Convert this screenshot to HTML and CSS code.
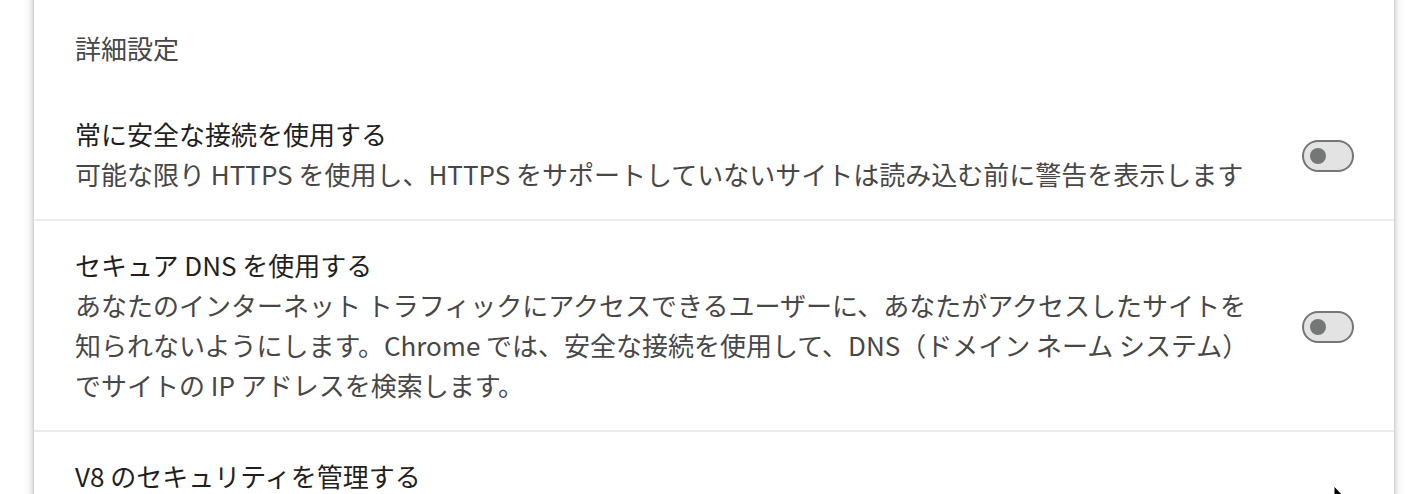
FILE: index.html
```html
<!DOCTYPE html>
<html lang="ja">
<head>
<meta charset="utf-8">
<title>詳細設定</title>
<link rel="stylesheet" href="styles.css">
</head>
<body>
<div class="page">
  <section class="card">
    <h2 class="section-title">詳細設定</h2>
    <div class="row">
      <div class="text">
        <div class="primary">常に安全な接続を使用する</div>
        <div class="secondary">可能な限り HTTPS を使用し、HTTPS をサポートしていないサイトは読み込む前に警告を表示します</div>
      </div>
      <div class="toggle"><span class="knob"></span></div>
    </div>
    <div class="row">
      <div class="text">
        <div class="primary">セキュア DNS を使用する</div>
        <div class="secondary">あなたのインターネット トラフィックにアクセスできるユーザーに、あなたがアクセスしたサイトを<br>知られないようにします。Chrome では、安全な接続を使用して、DNS（ドメイン ネーム システム）<br>でサイトの IP アドレスを検索します。</div>
      </div>
      <div class="toggle"><span class="knob"></span></div>
    </div>
    <div class="row">
      <div class="text">
        <div class="primary">V8 のセキュリティを管理する</div>
      </div>
    </div>
  </section>
</div>
<svg class="cursor" width="14" height="22" viewBox="0 0 14 22"><path d="M1 1 L1 17 L5 13.5 L7.8 20 L10 19 L7.3 12.6 L12 12.6 Z" fill="#000" stroke="#fff" stroke-width="1"/></svg>
</body>
</html>
```

FILE: styles.css
```css
html, body {
  margin: 0;
  padding: 0;
  background: #ffffff;
  overflow: hidden;
  height: 494px;
}

body {
  font-family: "Noto Sans CJK JP", "Noto Sans", sans-serif;
  font-size: 26px;
  line-height: 40px;
  color: #1f1f1f;
}

.page {
  padding: 0 28px 0 34px;
}

.card {
  margin-top: -20px;
  background: #ffffff;
  box-shadow: 0 2px 4px 0 rgba(60, 64, 67, 0.3), 0 2px 8px 3px rgba(60, 64, 67, 0.15);
  min-height: 600px;
}

.section-title {
  margin: 0;
  padding: 48px 41px 22px;
  font-size: 26px;
  font-weight: 400;
  line-height: 40px;
  color: #474747;
}

.row {
  display: flex;
  align-items: center;
  padding: 24px 40px 25px 41px;
}

.row + .row {
  border-top: 2px solid #ececec;
}

.text {
  flex: 1;
  min-width: 0;
}

.primary {
  color: #1f1f1f;
}

.secondary {
  color: #474747;
  white-space: nowrap;
}

.toggle {
  box-sizing: border-box;
  width: 52px;
  height: 32px;
  margin-top: 4px;
  border: 2px solid #747775;
  border-radius: 16px;
  background: #e3e3e3;
  display: flex;
  align-items: center;
  padding-left: 6px;
  flex-shrink: 0;
}

.knob {
  width: 16px;
  height: 16px;
  border-radius: 50%;
  background: #747775;
}

.cursor {
  position: absolute;
  left: 1333px;
  top: 485px;
}
```
